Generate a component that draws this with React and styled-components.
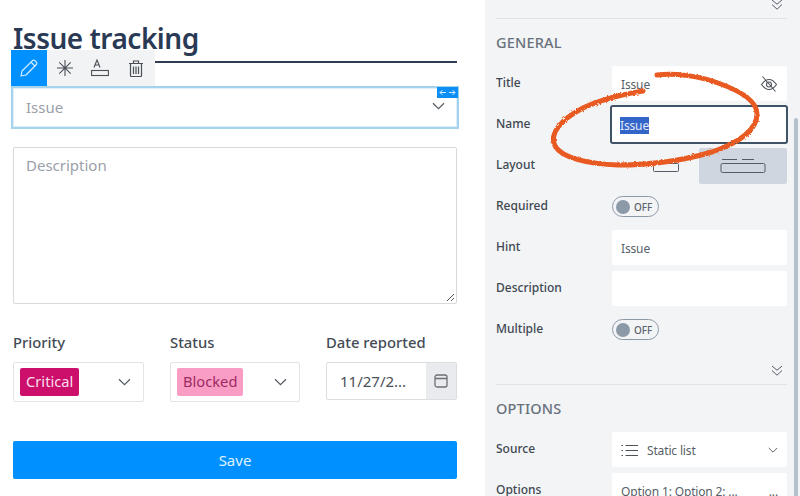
import styled, { createGlobalStyle } from 'styled-components';

const GlobalStyle = createGlobalStyle`
	html, body {
		margin: 0;
		padding: 0;
		height: 100%;
		overflow: hidden;
		background: #fff;
		font-family: "Noto Sans", "Open Sans", "Liberation Sans", sans-serif;
	}
	* {
		box-sizing: border-box;
	}
`;

const Page = styled.div`
	position: relative;
	display: flex;
	width: 800px;
	height: 496px;
	overflow: hidden;
`;

const FormPane = styled.div`
	width: 485px;
	flex: none;
	padding: 17px 28px 0 13px;
	background: #fff;
`;

const Title = styled.h1`
	margin: 0;
	height: 46px;
	border-bottom: 2px solid #2f3c52;
	font-size: 28px;
	line-height: 42px;
	font-weight: 600;
	letter-spacing: -0.5px;
	color: #2a3a55;
`;

const SelectedField = styled.div`
	position: relative;
	display: flex;
	align-items: center;
	justify-content: space-between;
	height: 43px;
	margin: 23px -2px 0;
	padding: 0 12px 2px 13px;
	border: 2px solid #a5d3ee;
	outline: 1px solid #dfeef8;
	outline-offset: -3px;
	font-size: 15px;
	color: #9aa1a9;
`;

const ResizeHandle = styled.div`
	position: absolute;
	top: -1px;
	right: -1px;
	width: 21px;
	height: 11px;
	display: flex;
	align-items: center;
	justify-content: center;
	background: #0d8ef5;
`;

const Toolbar = styled.div`
	position: absolute;
	top: 50px;
	left: 11px;
	width: 144px;
	height: 36px;
	display: flex;
	align-items: center;
	background: #f1f3f5;
`;

const ToolButton = styled.div`
	width: ${(p) => p.$width}px;
	height: 36px;
	display: flex;
	align-items: center;
	justify-content: center;
	background: ${(p) => (p.$active ? '#0090ff' : 'transparent')};
`;

const TextArea = styled.div`
	position: relative;
	height: 157px;
	margin-top: 18px;
	padding: 6px 12px;
	border: 1px solid #d7d9dc;
	border-radius: 2px;
	font-size: 15px;
	line-height: 22px;
	color: #9aa1a9;
`;

const Grip = styled.svg`
	position: absolute;
	right: 1px;
	bottom: 1px;
`;

const FieldRow = styled.div`
	display: grid;
	grid-template-columns: 131px 130px 131px;
	column-gap: 26px;
	margin-top: 26px;
`;

const FieldLabel = styled.div`
	height: 24px;
	font-size: 14.8px;
	line-height: 24px;
	font-weight: 500;
	color: #444b55;
	margin-bottom: 8px;
`;

const SelectBox = styled.div`
	display: flex;
	align-items: center;
	justify-content: space-between;
	height: 40px;
	padding: 0 12px 0 6px;
	border: 1px solid #e2e3e8;
	border-radius: 2px;
`;

const Tag = styled.span`
	height: 28px;
	padding: 0 6px;
	border-radius: 2px;
	font-size: 14.7px;
	line-height: 27px;
	background: ${(p) => p.$bg};
	color: ${(p) => p.$color};
`;

const DateBox = styled.div`
	display: flex;
	height: 38px;
	border: 1px solid #dcdde0;
	border-radius: 2px;
	overflow: hidden;
`;

const DateValue = styled.div`
	flex: 1;
	padding-left: 13px;
	font-size: 15px;
	line-height: 36px;
	color: #4b5158;
`;

const DateAddon = styled.div`
	width: 30px;
	display: flex;
	align-items: center;
	justify-content: center;
	background: #e9ebee;
`;

const SaveButton = styled.button`
	display: block;
	width: 100%;
	height: 38px;
	margin-top: 39px;
	border: none;
	border-radius: 2px;
	background: #0090ff;
	color: #dff2ff;
	font-family: inherit;
	font-size: 15px;
`;

const SidePane = styled.div`
	position: relative;
	flex: 1;
	padding: 0 13px 0 11px;
	background: #f2f4f6;
`;

const ScrollThumb = styled.div`
	position: absolute;
	top: 118px;
	right: 2px;
	bottom: 0;
	width: 4px;
	background: #b4c1cd;
	border-radius: 2px 2px 0 0;
`;

const CollapseRow = styled.div`
	display: flex;
	justify-content: flex-end;
	align-items: flex-end;
	height: ${(p) => p.$height}px;
	padding: 0 4px 8px 0;
	border-bottom: 1px solid #dfe2e6;
`;

const SectionTitle = styled.h2`
	margin: 0;
	height: 47px;
	padding-top: 12px;
	font-size: 14.5px;
	line-height: 22px;
	font-weight: 500;
	letter-spacing: 0.2px;
	color: #68717c;
`;

const PropRow = styled.div`
	display: grid;
	grid-template-columns: 116px 175px;
	height: 41px;
	align-items: start;
`;

const PropLabel = styled.div`
	padding-top: 7px;
	font-size: 12px;
	line-height: 20px;
	font-weight: 500;
	color: #404750;
`;

const PropInput = styled.div`
	display: flex;
	align-items: center;
	justify-content: space-between;
	height: 35px;
	padding: 1px 9px 0;
	border-radius: 2px;
	background: #fff;
	font-size: 12px;
	letter-spacing: -0.15px;
	color: #585f68;
`;

const FocusedInput = styled(PropInput)`
	height: 39px;
	margin: -2px -1px 0 -2px;
	padding: 1px 8px 0;
	border: 2px solid #3f5266;
	border-radius: 3px;
`;

const Highlight = styled.span`
	background: #3465c8;
	line-height: 17px;
	color: #e4eafa;
`;

const LayoutChoices = styled.div`
	display: grid;
	grid-template-columns: 87px 88px;
	height: 36px;
`;

const LayoutChoice = styled.div`
	display: flex;
	align-items: center;
	justify-content: center;
	border-radius: 2px;
	background: ${(p) => (p.$active ? '#d0d6df' : 'transparent')};
`;

const Toggle = styled.div`
	display: flex;
	align-items: center;
	gap: 4px;
	width: 47px;
	height: 21px;
	margin-top: 7px;
	padding-left: 3px;
	border: 1px solid #8d99a6;
	border-radius: 11px;
	font-size: 10px;
	font-weight: 500;
	color: #5a626c;
`;

const Knob = styled.span`
	width: 14px;
	height: 14px;
	border-radius: 50%;
	background: #8c9aa8;
`;

const SourceValue = styled.div`
	display: flex;
	align-items: center;
	gap: 9px;
`;

const Scribble = styled.svg`
	position: absolute;
	top: 0;
	left: 0;
	pointer-events: none;
`;

const Chevron = ({ size = 13, color = '#555b63' }) => (
	<svg width={size} height={size * 0.62} viewBox="0 0 13 8" fill="none" stroke={color} strokeWidth="1.2">
		<path d="M1 1.2l5.5 5.5 5.5-5.5" />
	</svg>
);

const DoubleChevron = () => (
	<svg width="12" height="12" viewBox="0 0 12 12" fill="none" stroke="#555c66" strokeWidth="1">
		<path d="M1 2l5 4.200 5-4.200" />
		<path d="M1 6.500l5 4.700 5-4.700" />
	</svg>
);

const Prop = ({ label, children }) => (
	<PropRow>
		<PropLabel>{label}</PropLabel>
		<div>{children}</div>
	</PropRow>
);

const OffToggle = () => (
	<Toggle>
		<Knob />
		OFF
	</Toggle>
);

const App = () => (
	<>
		<GlobalStyle />
		<Page>
			<FormPane>
				<Title>Issue tracking</Title>
				<SelectedField>
					Issue
					<Chevron />
					<ResizeHandle>
						<svg width="17" height="7" viewBox="0 0 17 7" fill="none" stroke="#d6eeff" strokeWidth="1">
							<path d="M7 3.5H1M3.5 1L1 3.5 3.5 6M10 3.5h6M13.5 1L16 3.5 13.5 6" />
						</svg>
					</ResizeHandle>
				</SelectedField>
				<TextArea>
					Description
					<Grip width="9" height="9" viewBox="0 0 9 9" stroke="#555" strokeWidth="1">
						<path d="M1 8l7-7M5 8l3-3" />
					</Grip>
				</TextArea>
				<FieldRow>
					<div>
						<FieldLabel>Priority</FieldLabel>
						<SelectBox>
							<Tag $bg="#cc0f6b" $color="#fbdfec">Critical</Tag>
							<Chevron />
						</SelectBox>
					</div>
					<div>
						<FieldLabel>Status</FieldLabel>
						<SelectBox>
							<Tag $bg="#f99dc5" $color="#a02a63">Blocked</Tag>
							<Chevron />
						</SelectBox>
					</div>
					<div>
						<FieldLabel>Date reported</FieldLabel>
						<DateBox>
							<DateValue>11/27/2...</DateValue>
							<DateAddon>
								<svg width="14" height="14" viewBox="0 0 14 14" fill="none" stroke="#6c7176" strokeWidth="1.3">
									<rect x="1" y="1" width="12" height="12" rx="2" />
									<path d="M1 4.5h12" />
								</svg>
							</DateAddon>
						</DateBox>
					</div>
				</FieldRow>
				<SaveButton>Save</SaveButton>
			</FormPane>

			<Toolbar>
				<ToolButton $active $width={36}>
					<svg width="20" height="20" viewBox="0 0 20 20" fill="none" stroke="#d8f0ff" strokeWidth="1.2" strokeLinejoin="round">
						<path d="M2 18l1-5L13.5 2.6a1.6 1.6 0 0 1 2.3 0l1.6 1.6a1.6 1.6 0 0 1 0 2.3L7 17z" />
						<path d="M12 4.2l3.8 3.8" />
					</svg>
				</ToolButton>
				<ToolButton $width={35}>
					<svg width="18" height="18" viewBox="0 0 18 18" fill="none" stroke="#4b5057" strokeWidth="1.1">
						<path d="M9 1v16M1 9h16M3.3 3.3l11.4 11.4M14.7 3.3L3.3 14.7" />
					</svg>
				</ToolButton>
				<ToolButton $width={35}>
					<svg width="18" height="18" viewBox="0 0 18 18" fill="none" stroke="#4b5057" strokeWidth="1.1">
						<path d="M3 8.5L6 1l3 7.5M4 6h4" />
						<rect x="0.6" y="11.5" width="16.8" height="5" />
					</svg>
				</ToolButton>
				<ToolButton $width={37}>
					<svg width="14" height="17" viewBox="0 0 14 17" fill="none" stroke="#4b5057" strokeWidth="1.2">
						<path d="M0 3.500h14M4.500 3.500V1h5v2.500M1.500 3.500v12a1 1 0 0 0 1 1h9a1 1 0 0 0 1-1v-12" />
						<path d="M4.500 6.500v7.500M7 6.500v7.500M9.500 6.500v7.500" />
					</svg>
				</ToolButton>
			</Toolbar>

			<SidePane>
				<CollapseRow $height={19}>
					<DoubleChevron />
				</CollapseRow>
				<SectionTitle>GENERAL</SectionTitle>
				<Prop label="Title">
					<PropInput>
						Issue
						<svg width="18" height="18" viewBox="0 0 18 18" fill="none" stroke="#4d535a" strokeWidth="1.1">
							<path d="M1.500 9.500C4 6 6.500 4.500 9 4.500s5 1.500 7.500 5c-2.500 3.500-5 5-7.500 5s-5-1.500-7.500-5z" />
							<circle cx="9" cy="9.500" r="2.500" />
							<path d="M2.500 1.500l13 15" />
						</svg>
					</PropInput>
				</Prop>
				<Prop label="Name">
					<FocusedInput>
						<Highlight>Issue</Highlight>
					</FocusedInput>
				</Prop>
				<Prop label="Layout">
					<LayoutChoices>
						<LayoutChoice>
							<svg width="50" height="14" viewBox="0 0 50 14" fill="none" stroke="#555c66" strokeWidth="1">
								<rect x="22.500" y="4.500" width="25" height="8" rx="1" />
							</svg>
						</LayoutChoice>
						<LayoutChoice $active>
							<svg width="46" height="14" viewBox="0 0 46 14" fill="none" stroke="#555c66" strokeWidth="1">
								<path d="M2 0.500h15M22 0.500h12" />
								<rect x="1" y="4.500" width="44" height="9" rx="1.500" />
							</svg>
						</LayoutChoice>
					</LayoutChoices>
				</Prop>
				<Prop label="Required">
					<OffToggle />
				</Prop>
				<Prop label="Hint">
					<PropInput>Issue</PropInput>
				</Prop>
				<Prop label="Description">
					<PropInput />
				</Prop>
				<Prop label="Multiple">
					<OffToggle />
				</Prop>
				<CollapseRow $height={32}>
					<DoubleChevron />
				</CollapseRow>
				<SectionTitle>OPTIONS</SectionTitle>
				<Prop label="Source">
					<PropInput>
						<SourceValue>
							<svg width="17" height="13" viewBox="0 0 17 13" fill="none" stroke="#4d535a" strokeWidth="1.1">
								<path d="M4.500 1.500H17M4.500 6.500H17M4.500 11.500H17M0.500 1.500h1.500M0.500 6.500h1.500M0.500 11.500h1.500" />
							</svg>
							Static list
						</SourceValue>
						<Chevron size={10} />
					</PropInput>
				</Prop>
				<Prop label="Options">
					<PropInput>
						Option 1: Option 2: ...
						<span>...</span>
					</PropInput>
				</Prop>
				<ScrollThumb />
			</SidePane>

			<Scribble width="800" height="496" viewBox="0 0 800 496" fill="none">
				<defs>
					<filter id="rough" x="-10%" y="-10%" width="120%" height="120%">
						<feTurbulence type="fractalNoise" baseFrequency="0.6" numOctaves="2" result="noise" />
						<feDisplacementMap in="SourceGraphic" in2="noise" scale="3" />
					</filter>
				</defs>
				<path
					d="M657 75C675 73 700 76 718 83C738 90 757 100 757 114C757 130 738 143 712 152C685 160 650 165 618 165C588 164 562 158 555 146C549 134 560 120 583 108C602 99 625 94 643 91"
					stroke="#e85a20"
					strokeWidth="5"
					strokeLinecap="round"
					filter="url(#rough)"
				/>
			</Scribble>
		</Page>
	</>
);

export default App;
